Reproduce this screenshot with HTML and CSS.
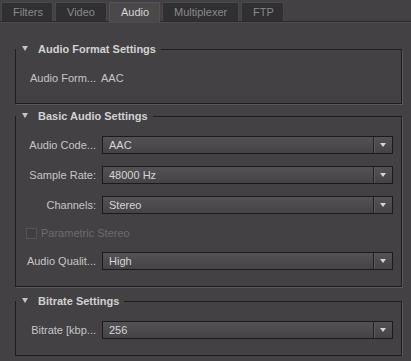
FILE: index.html
```html
<!DOCTYPE html>
<html lang="en">
<head>
    <meta charset="UTF-8">
    <meta name="viewport" content="width=device-width, initial-scale=1.0">
    <title>Audio Export Settings</title>
    <link rel="stylesheet" href="styles.css">
</head>
<body>
    <div class="tabs">
        <div class="tab tab-filters">Filters</div>
        <div class="tab tab-video">Video</div>
        <div class="tab tab-audio active">Audio</div>
        <div class="tab tab-mux">Multiplexer</div>
        <div class="tab tab-ftp">FTP</div>
    </div>

    <div class="panel">
        <fieldset class="group">
            <legend><span class="arrow"></span>Audio Format Settings</legend>
            <div class="row">
                <label class="row-label">Audio Form...</label>
                <span class="value">AAC</span>
            </div>
        </fieldset>

        <fieldset class="group">
            <legend><span class="arrow"></span>Basic Audio Settings</legend>
            <div class="row">
                <label class="row-label">Audio Code...</label>
                <div class="combo"><span class="combo-text">AAC</span><span class="combo-btn"></span></div>
            </div>
            <div class="row">
                <label class="row-label">Sample Rate:</label>
                <div class="combo"><span class="combo-text">48000 Hz</span><span class="combo-btn"></span></div>
            </div>
            <div class="row">
                <label class="row-label">Channels:</label>
                <div class="combo"><span class="combo-text">Stereo</span><span class="combo-btn"></span></div>
            </div>
            <div class="row check-row">
                <span class="checkbox"></span>
                <span class="check-text">Parametric Stereo</span>
            </div>
            <div class="row">
                <label class="row-label">Audio Qualit...</label>
                <div class="combo"><span class="combo-text">High</span><span class="combo-btn"></span></div>
            </div>
        </fieldset>

        <fieldset class="group group-bitrate">
            <legend><span class="arrow"></span>Bitrate Settings</legend>
            <div class="row">
                <label class="row-label">Bitrate [kbp...</label>
                <div class="combo"><span class="combo-text">256</span><span class="combo-btn"></span></div>
            </div>
        </fieldset>
    </div>
</body>
</html>
```

FILE: styles.css
```css
body {
    margin: 0;
    background-color: #434144;
    font-family: "Liberation Sans", Arial, sans-serif;
    font-size: 11px;
    color: #c6c6c6;
}

.tabs {
    display: flex;
    gap: 2px;
    padding: 2px 0 0 1px;
    height: 19px;
    border-bottom: 1px solid #2b2a2c;
    box-shadow: 0 1px 0 #4d4b4e;
}

.tab {
    box-sizing: border-box;
    height: 19px;
    padding-left: 11px;
    background: #302f31;
    border: 1px solid #4a484b;
    border-bottom: none;
    color: #8a888c;
    line-height: 18px;
    white-space: nowrap;
}

.tab.active {
    height: 20px;
    background: #4a484b;
    border-color: #545255;
    color: #d6d6d6;
}

.tab-filters { width: 52px; }
.tab-video { width: 52px; }
.tab-audio { width: 51px; }
.tab-mux { width: 77px; }
.tab-ftp { width: 43px; }

.panel {
    padding-top: 20px;
}

.group {
    margin: 0 9px 0 15px;
    padding: 13px 0 16px 0;
    border: 1px solid #1e1d1f;
    box-shadow: 1px 1px 0 #5a585b;
    min-width: 0;
}

.group + .group {
    margin-top: 5px;
}

.group-bitrate {
    margin-top: 7px !important;
}

.group legend {
    padding: 0 5px 0 6px;
    line-height: 14px;
    font-weight: bold;
    color: #d2d2d2;
}

.arrow {
    display: inline-block;
    width: 0;
    height: 0;
    margin-right: 10px;
    vertical-align: 2px;
    border-left: 3.5px solid transparent;
    border-right: 3.5px solid transparent;
    border-top: 5px solid #c4c4c4;
}

.row {
    display: flex;
    align-items: center;
    height: 18px;
    padding-left: 7px;
    margin-right: 8px;
}

.row + .row {
    margin-top: 12px;
}

.row-label {
    width: 73px;
    text-align: right;
    white-space: nowrap;
    margin-right: 6px;
}

.value {
    margin-left: -1px;
}

.combo {
    flex: 1;
    display: flex;
    box-sizing: border-box;
    height: 18px;
    border: 1px solid #1b1a1c;
    background: linear-gradient(#535154, #454346);
    color: #d6d6d6;
}

.combo-text {
    flex: 1;
    padding-left: 6px;
    line-height: 16px;
}

.combo-btn {
    position: relative;
    width: 18px;
    border-left: 1px solid #232224;
    box-shadow: inset 1px 0 0 #5b595c;
}

.combo-btn::after {
    content: "";
    position: absolute;
    left: 6px;
    top: 6px;
    border-left: 3.5px solid transparent;
    border-right: 3.5px solid transparent;
    border-top: 4px solid #d4d4d4;
}

.check-row {
    height: 14px;
    padding-left: 10px;
}

.checkbox {
    box-sizing: border-box;
    width: 11px;
    height: 11px;
    border: 1px solid #555356;
    background: #3f3d40;
    margin-right: 4px;
}

.check-text {
    color: #6d6b6e;
}
```
